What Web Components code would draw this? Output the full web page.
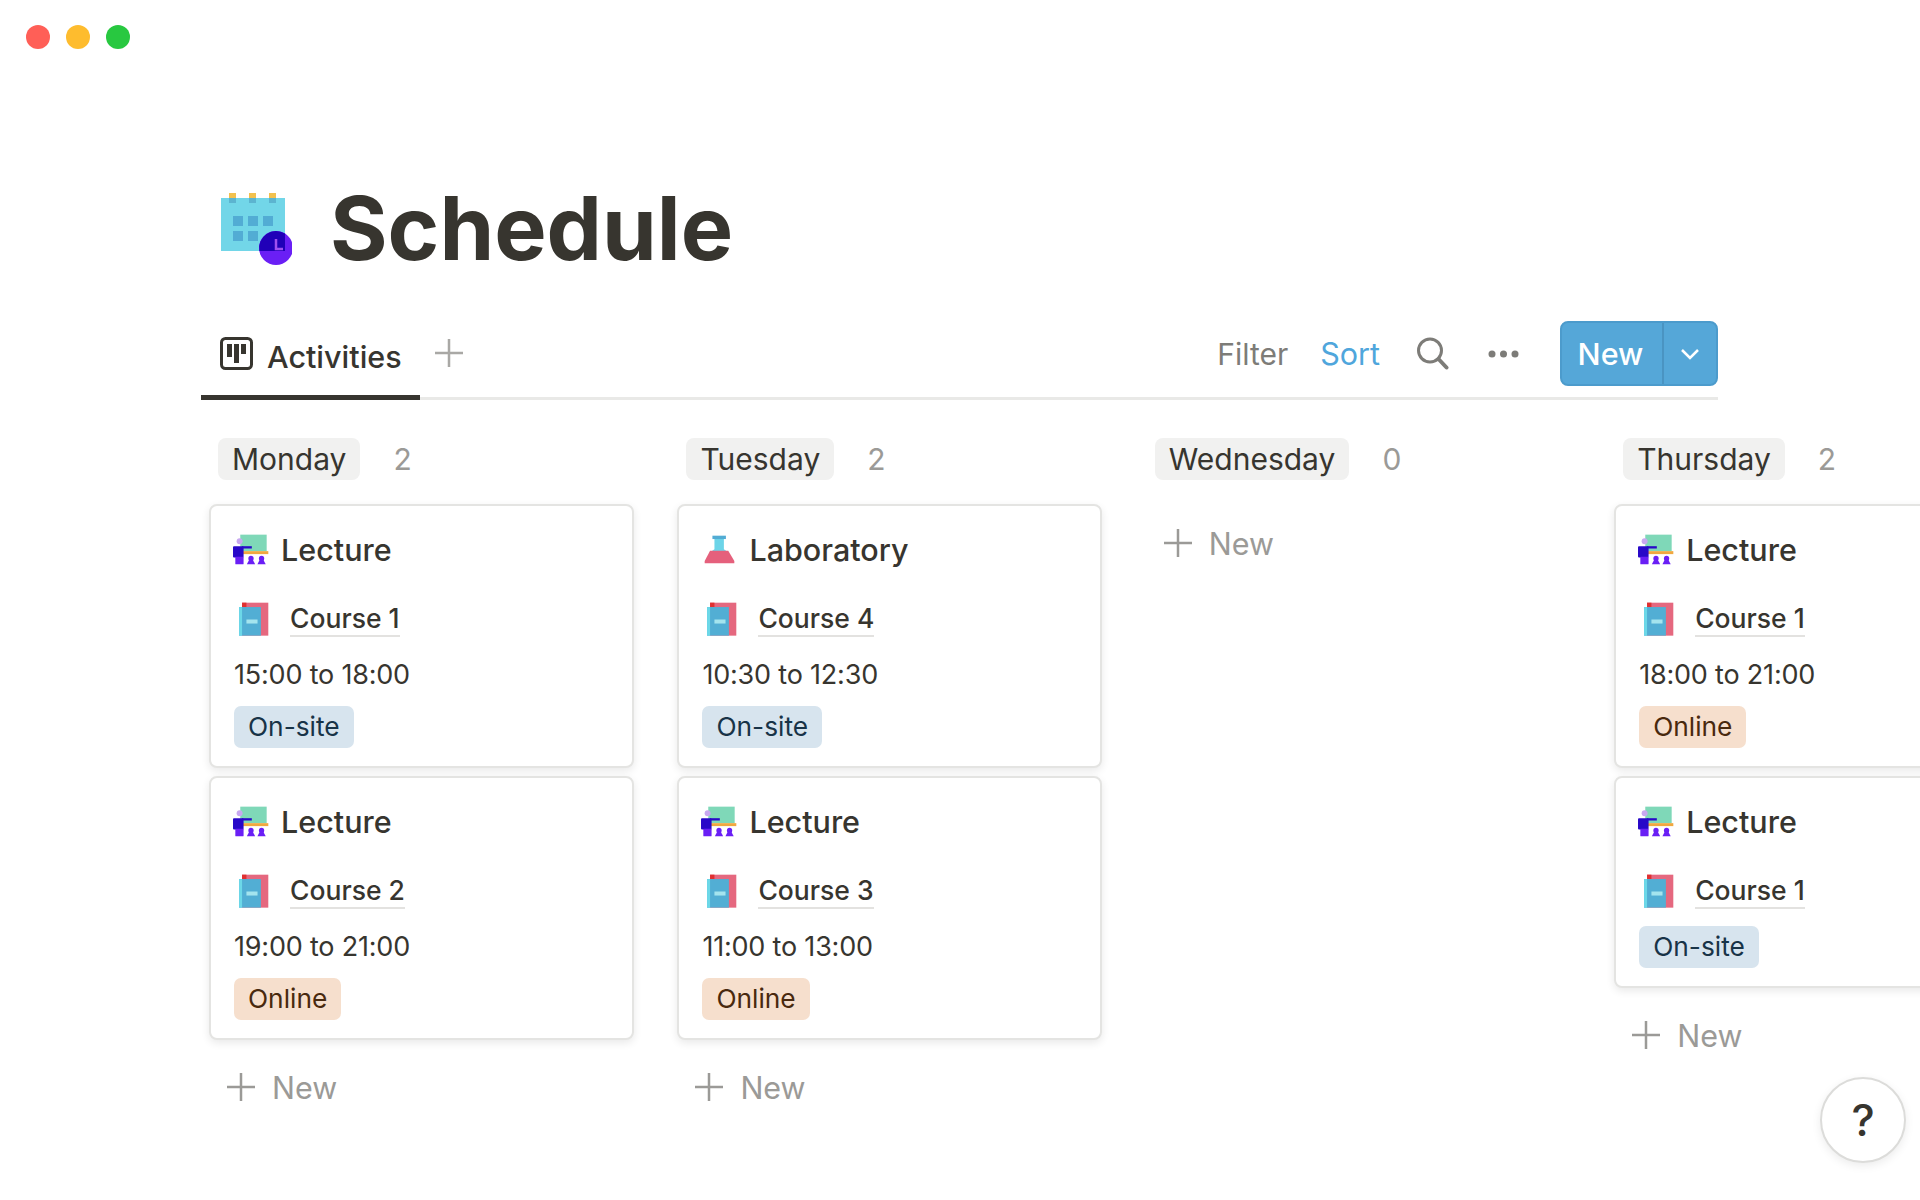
<!DOCTYPE html>
<html>
<head>
<meta charset="utf-8">
<title>Schedule</title>
<style>
  html, body { margin: 0; padding: 0; background: #fff; }
  body { font-family: Inter, "Liberation Sans", sans-serif; color: #37352f; }
</style>
</head>
<body>
<schedule-page>
  <window-dots></window-dots>
  <page-title icon="calendar">Schedule</page-title>
  <view-bar></view-bar>
  <board-view>
    <board-column name="Monday" count="2">
      <board-card icon="lecture" course="Course 1" time="15:00 to 18:00" status="On-site">Lecture</board-card>
      <board-card icon="lecture" course="Course 2" time="19:00 to 21:00" status="Online">Lecture</board-card>
    </board-column>
    <board-column name="Tuesday" count="2">
      <board-card icon="flask" course="Course 4" time="10:30 to 12:30" status="On-site">Laboratory</board-card>
      <board-card icon="lecture" course="Course 3" time="11:00 to 13:00" status="Online">Lecture</board-card>
    </board-column>
    <board-column name="Wednesday" count="0"></board-column>
    <board-column name="Thursday" count="2">
      <board-card icon="lecture" course="Course 1" time="18:00 to 21:00" status="Online">Lecture</board-card>
      <board-card icon="lecture" course="Course 1" status="On-site">Lecture</board-card>
    </board-column>
  </board-view>
  <help-button></help-button>
</schedule-page>

<script>
const ICONS = {
  calendar: `<svg viewBox="0 0 71 72" width="71" height="72">
    <rect x="8" y="0" width="7" height="10" fill="#f2c14e"/><rect x="28" y="0" width="7" height="10" fill="#f2c14e"/><rect x="48" y="0" width="7" height="10" fill="#f2c14e"/>
    <rect x="0" y="5" width="64" height="53" fill="#72d6e8"/>
    <rect x="8" y="5" width="7" height="5" fill="#5cb4d0"/><rect x="28" y="5" width="7" height="5" fill="#5cb4d0"/><rect x="48" y="5" width="7" height="5" fill="#5cb4d0"/>
    <g fill="#52acd4"><rect x="12" y="23" width="10" height="10"/><rect x="27" y="23" width="10" height="10"/><rect x="42" y="23" width="10" height="10"/><rect x="12" y="38" width="10" height="10"/><rect x="27" y="38" width="10" height="10"/></g>
    <circle cx="55" cy="55" r="17" fill="#6a1ff5"/>
    <path d="M38.300 58H64V40.600A17 17 0 0 0 38.300 58z" fill="#2000b8"/>
    <path d="M55 46v10h7" fill="none" stroke="#a050f0" stroke-width="2.500"/>
  </svg>`,
  lecture: `<svg viewBox="20 25 115 100" width="38" height="33">
    <rect x="45" y="30" width="80" height="50" fill="#7fd8b8"/>
    <rect x="52" y="80" width="78" height="9" fill="#f0a840"/>
    <circle cx="43" cy="50" r="9" fill="#c8a8f0"/>
    <rect x="23" y="65" width="32" height="34" rx="3" fill="#2808c8"/>
    <rect x="50" y="65" width="30" height="7" fill="#2808c8"/>
    <rect x="30" y="97" width="25" height="23" rx="2" fill="#6a1ff5"/>
    <g fill="#6a1ff5"><circle cx="77.500" cy="102" r="8"/><path d="M72 106h11l7 14H65z"/><circle cx="109.500" cy="102" r="8"/><path d="M104 106h11l7 14H97z"/></g>
  </svg>`,
  book: `<svg viewBox="40 225 95 107" width="32" height="36">
    <rect x="52" y="230" width="78" height="98" fill="#e5687f"/>
    <rect x="52" y="230" width="13" height="13" fill="#e03030"/>
    <rect x="43" y="243" width="65" height="85" fill="#52aed4"/>
    <rect x="43" y="243" width="9" height="85" fill="#6cd8e8"/>
    <rect x="65" y="280" width="33" height="12" fill="#a4e4ee"/>
  </svg>`,
  flask: `<svg viewBox="100 108 92 86" width="31" height="29">
    <path d="M131 120h28v30l14 10H117l14-10z" fill="#6cd4e8"/>
    <rect x="125" y="110" width="40" height="10" fill="#52acd4"/>
    <path d="M118 155h54l18 30v7h-88v-7z" fill="#e5607c"/>
  </svg>`
};

class WindowDots extends HTMLElement {
  constructor() {
    super();
    this.attachShadow({ mode: 'open' });
    this.shadowRoot.innerHTML = `
      <style>
        :host { display: flex; gap: 16px; padding: 25px 0 0 26px; height: 25px; }
        i { width: 24px; height: 24px; border-radius: 50%; display: block; }
      </style>
      <i style="background:#ff5f57"></i><i style="background:#febc2e"></i><i style="background:#28c840"></i>
    `;
  }
}

class PageTitle extends HTMLElement {
  constructor() {
    super();
    this.attachShadow({ mode: 'open' });
  }
  connectedCallback() {
    this.shadowRoot.innerHTML = `
      <style>
        :host { display: flex; align-items: center; height: 72px; margin: 143px 0 0 221px; }
        h1 { margin: -2px 0 0 38px; font: 700 88px/72px Inter, "Liberation Sans", sans-serif; color: #37352f; }
        svg { display: block; }
      </style>
      ${ICONS[this.getAttribute('icon')]}
      <h1><slot></slot></h1>
    `;
  }
}

class ViewBar extends HTMLElement {
  constructor() {
    super();
    this.attachShadow({ mode: 'open' });
    this.shadowRoot.innerHTML = `
      <style>
        :host { display: flex; align-items: flex-start; height: 76px; margin: 56px 202px 0 201px; border-bottom: 3px solid #e9e9e7; position: relative; }
        .tab { display: flex; align-items: center; width: 219px; height: 76px; padding: 0 0 10px 19px; box-sizing: border-box; position: relative; font-size: 30.500px; font-weight: 500; color: #37352f; }
        .tab svg { margin-right: 14px; margin-top: -2px; }
        .tab b { font-weight: 500; position: relative; top: 2px; }
        .tab::after { content: ''; position: absolute; left: 0; right: 0; bottom: -3px; height: 5px; background: #37352f; }
        .add { margin: 18px 0 0 15px; display: block; }
        .tools { margin-left: auto; height: 65px; display: flex; align-items: center; font-size: 30.500px; color: #7d7c78; }
        .filter { font-size: 30px; }
        .sort { color: #4fa6dc; margin-left: 32px; }
        .search { margin-left: 36px; }
        .dots { margin-left: 39px; margin-right: 41px; }
        .btn { display: flex; width: 158px; height: 65px; box-sizing: border-box; border: 2px solid #4c9bcc; border-radius: 8px; background: #55a7d8; color: #fff; font-weight: 500; }
        .btn span { width: 102px; border-right: 2px solid #4a94c2; display: flex; align-items: center; justify-content: center; padding-right: 3px; box-sizing: border-box; }
        .btn div { flex: 1; display: flex; align-items: center; justify-content: center; }
      </style>
      <div class="tab">
        <svg width="33" height="33" viewBox="0 0 33 33"><rect x="1.500" y="1.500" width="30" height="30" rx="4" fill="none" stroke="#37352f" stroke-width="3"/><g fill="#37352f"><rect x="7" y="7" width="5" height="13"/><rect x="14" y="7" width="5" height="19"/><rect x="21" y="7" width="5" height="10"/></g></svg>
        <b>Activities</b>
      </div>
      <svg class="add" width="28" height="28" viewBox="0 0 28 28"><path d="M14 0v28M0 14h28" stroke="#a9a8a5" stroke-width="2.500"/></svg>
      <div class="tools">
        <span class="filter">Filter</span>
        <span class="sort">Sort</span>
        <svg class="search" width="33" height="33" viewBox="0 0 33 33" fill="none" stroke="#7d7c78"><circle cx="14" cy="13.500" r="11.500" stroke-width="3"/><path d="M22.500 22l8 8.500" stroke-width="4" stroke-linecap="round"/></svg>
        <svg class="dots" width="31" height="8" viewBox="0 0 31 8" fill="#7d7c78"><circle cx="4" cy="4" r="3.500"/><circle cx="15.500" cy="4" r="3.500"/><circle cx="27" cy="4" r="3.500"/></svg>
        <div class="btn"><span>New</span><div><svg width="20" height="12" viewBox="0 0 20 12" fill="none" stroke="#fff" stroke-width="2.500"><path d="M2 2l8 8 8-8"/></svg></div></div>
      </div>
    `;
  }
}

class BoardView extends HTMLElement {
  constructor() {
    super();
    this.attachShadow({ mode: 'open' });
    this.shadowRoot.innerHTML = `
      <style>
        :host { display: flex; gap: 43.400px; margin: 38px 0 0 209px; }
      </style>
      <slot></slot>
    `;
  }
}

class BoardColumn extends HTMLElement {
  constructor() {
    super();
    this.attachShadow({ mode: 'open' });
  }
  connectedCallback() {
    const empty = this.getAttribute('count') === '0';
    this.shadowRoot.innerHTML = `
      <style>
        :host { display: block; flex: 0 0 425px; width: 425px; }
        .head { display: flex; align-items: center; height: 42px; padding-left: 9px; margin-bottom: 24px; font-size: 30px; }
        .name { height: 42px; line-height: 42px; padding: 0 14px; border-radius: 8px; background: #f1f1f0; color: #37352f; }
        .count { margin-left: 33px; color: #9b9a97; }
        .cards { display: flex; flex-direction: column; gap: 8px; }
        .add { display: flex; align-items: center; height: 40px; margin-top: ${empty ? 19 : 27}px; padding-left: 18px; font-size: 30.500px; color: #9b9a97; }
        .add svg { margin-right: 17px; }
      </style>
      <div class="head"><span class="name">${this.getAttribute('name')}</span><span class="count">${this.getAttribute('count')}</span></div>
      <div class="cards"><slot></slot></div>
      <div class="add"><svg width="28" height="28" viewBox="0 0 28 28"><path d="M14 0v28M0 14h28" stroke="#9b9a97" stroke-width="2.500"/></svg>New</div>
    `;
  }
}

class BoardCard extends HTMLElement {
  constructor() {
    super();
    this.attachShadow({ mode: 'open' });
  }
  connectedCallback() {
    const time = this.getAttribute('time');
    const status = this.getAttribute('status');
    const online = status === 'Online';
    this.shadowRoot.innerHTML = `
      <style>
        :host { display: block; box-sizing: border-box; width: 425px; padding: 21px 0 18px 23px; border: 2px solid #e4e4e2; border-radius: 8px; background: #fff; box-shadow: 0 3px 8px rgba(15,15,15,.09); }
        .title { display: flex; align-items: center; height: 44px; font-size: 30.500px; font-weight: 500; color: #37352f; }
        .ic { flex: 0 0 38px; display: flex; justify-content: center; margin-left: -2px; margin-right: 11px; }
        .ic svg { display: block; }
        .course { display: flex; align-items: center; height: 46px; margin-top: 25px; font-size: 26.500px; font-weight: 500; color: #37352f; }
        .course svg { margin-left: 4px; margin-right: 20px; display: block; }
        .course span { border-bottom: 2px solid #e3e2e0; line-height: 34px; }
        .time { height: 40px; line-height: 38px; margin-top: 14px; font-size: 27px; letter-spacing: -0.2px; color: #37352f; }
        .tag { display: inline-block; height: 42px; line-height: 41px; margin-top: ${time ? 10 : 12}px; padding: 0 14px; border-radius: 7px; font-size: 26.300px; vertical-align: top; }
        .tag.on-site { background: #d7e4ee; color: #183347; }
        .tag.online { background: #f6dfcd; color: #49290e; }
      </style>
      <div class="title"><span class="ic">${ICONS[this.getAttribute('icon')]}</span><slot></slot></div>
      <div class="course">${ICONS.book}<span>${this.getAttribute('course')}</span></div>
      ${time ? `<div class="time">${time}</div>` : ''}
      <div><span class="tag ${online ? 'online' : 'on-site'}">${status}</span></div>
    `;
  }
}

class HelpButton extends HTMLElement {
  constructor() {
    super();
    this.attachShadow({ mode: 'open' });
    this.shadowRoot.innerHTML = `
      <style>
        :host { position: absolute; left: 1820px; top: 1077px; width: 86px; height: 86px; box-sizing: border-box; border: 2px solid #dcdcda; border-radius: 50%; background: #fff; box-shadow: 0 3px 10px rgba(15,15,15,.08); display: flex; align-items: center; justify-content: center; font-size: 44px; font-weight: 500; color: #37352f; }
      </style>
      ?
    `;
  }
}

class SchedulePage extends HTMLElement {
  constructor() {
    super();
    this.attachShadow({ mode: 'open' });
    this.shadowRoot.innerHTML = `
      <style>
        :host { display: block; position: relative; width: 1920px; height: 1200px; overflow: hidden; background: #fff; font-family: Inter, "Liberation Sans", sans-serif; }
      </style>
      <slot></slot>
    `;
  }
}

customElements.define('window-dots', WindowDots);
customElements.define('page-title', PageTitle);
customElements.define('view-bar', ViewBar);
customElements.define('board-view', BoardView);
customElements.define('board-column', BoardColumn);
customElements.define('board-card', BoardCard);
customElements.define('help-button', HelpButton);
customElements.define('schedule-page', SchedulePage);
</script>
</body>
</html>
